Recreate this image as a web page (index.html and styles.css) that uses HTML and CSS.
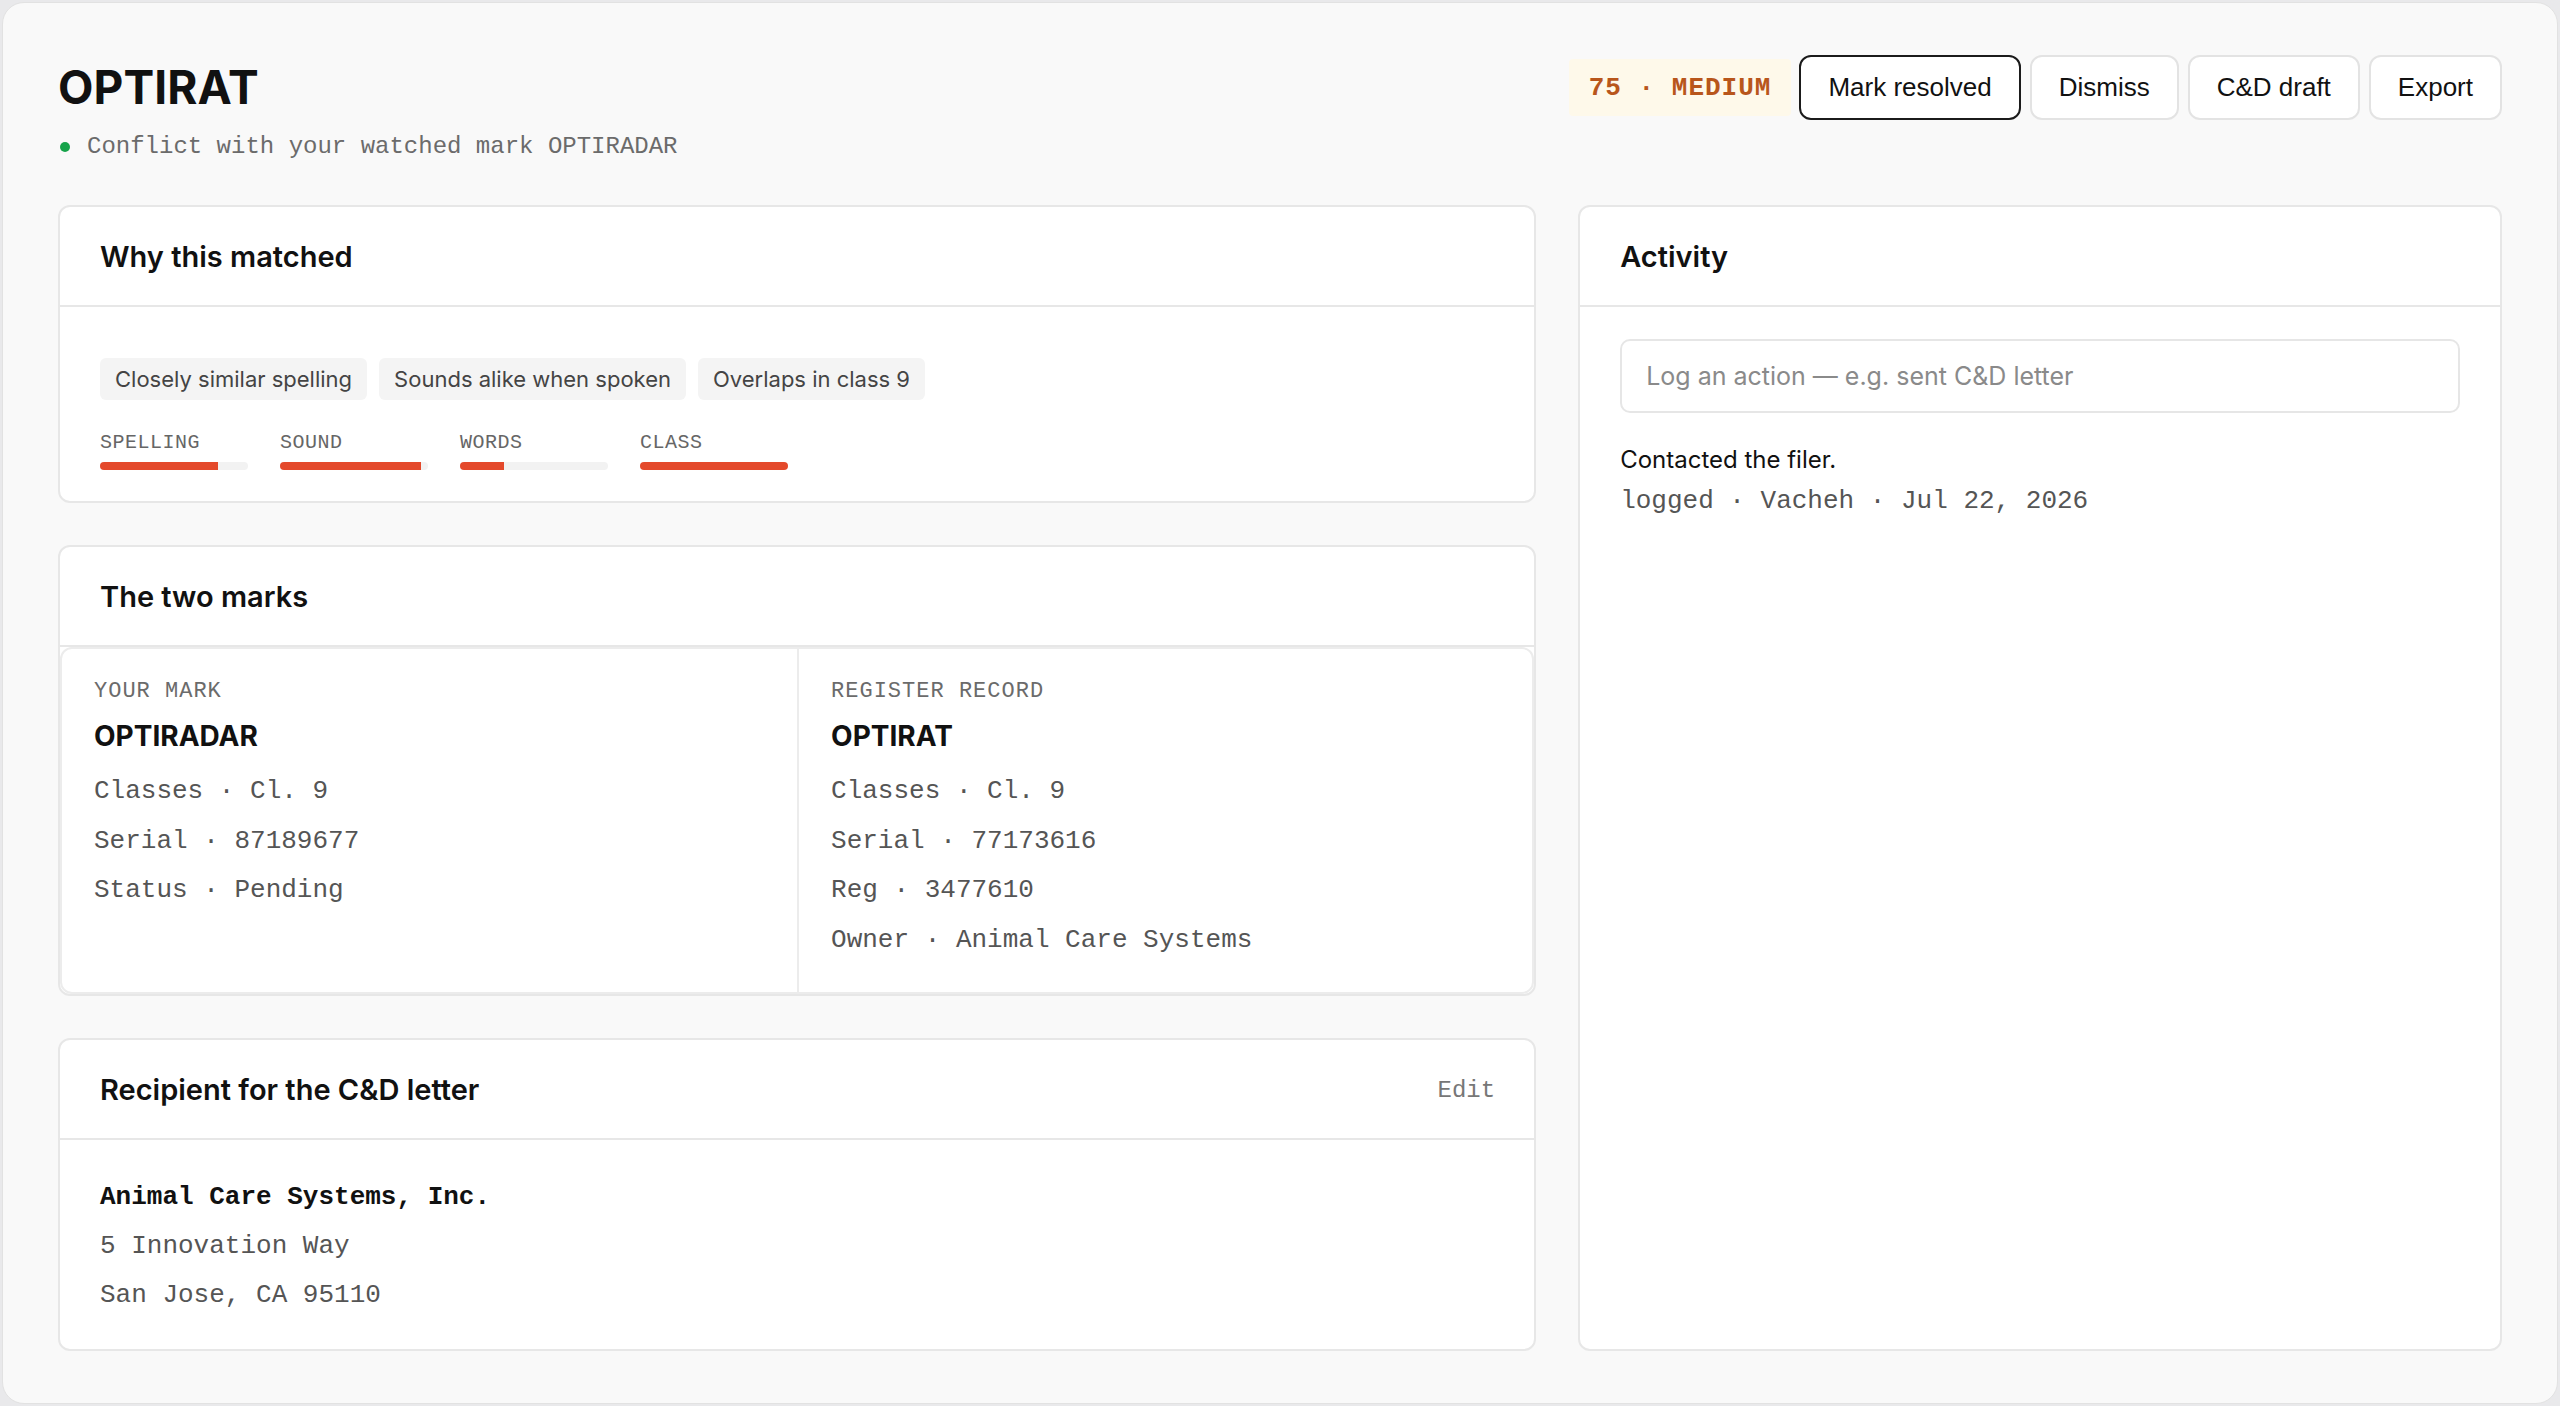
FILE: index.html
```html
<!DOCTYPE html>
<html>
    <head>
        <meta charset="utf-8">
        <title>OPTIRAT</title>
        <link rel="stylesheet" href="styles.css">
    </head>
    <body>
        <div class="frame">
            <div class="top">
                <div class="title-block">
                    <h1 class="title">OPTIRAT</h1>
                    <div class="subtitle"><span class="dot"></span>Conflict with your watched mark OPTIRADAR</div>
                </div>
                <div class="actions">
                    <span class="badge">75 · MEDIUM</span>
                    <button class="btn btn-primary">Mark resolved</button>
                    <button class="btn">Dismiss</button>
                    <button class="btn">C&amp;D draft</button>
                    <button class="btn">Export</button>
                </div>
            </div>

            <div class="layout">
                <div class="main-col">
                    <div class="card">
                        <div class="card-head"><h2>Why this matched</h2></div>
                        <div class="card-body why-body">
                            <div class="chips">
                                <span class="chip">Closely similar spelling</span>
                                <span class="chip">Sounds alike when spoken</span>
                                <span class="chip">Overlaps in class 9</span>
                            </div>
                            <div class="scores">
                                <div class="score">
                                    <div class="score-label">SPELLING</div>
                                    <div class="bar"><div class="fill" style="width:80%"></div></div>
                                </div>
                                <div class="score">
                                    <div class="score-label">SOUND</div>
                                    <div class="bar"><div class="fill" style="width:95%"></div></div>
                                </div>
                                <div class="score">
                                    <div class="score-label">WORDS</div>
                                    <div class="bar"><div class="fill" style="width:30%"></div></div>
                                </div>
                                <div class="score">
                                    <div class="score-label">CLASS</div>
                                    <div class="bar"><div class="fill" style="width:100%"></div></div>
                                </div>
                            </div>
                        </div>
                    </div>

                    <div class="card">
                        <div class="card-head"><h2>The two marks</h2></div>
                        <div class="marks">
                            <div class="mark">
                                <div class="mark-label">YOUR MARK</div>
                                <div class="mark-name">OPTIRADAR</div>
                                <div class="mark-row">Classes · Cl. 9</div>
                                <div class="mark-row">Serial · 87189677</div>
                                <div class="mark-row">Status · Pending</div>
                            </div>
                            <div class="mark">
                                <div class="mark-label">REGISTER RECORD</div>
                                <div class="mark-name">OPTIRAT</div>
                                <div class="mark-row">Classes · Cl. 9</div>
                                <div class="mark-row">Serial · 77173616</div>
                                <div class="mark-row">Reg · 3477610</div>
                                <div class="mark-row">Owner · Animal Care Systems</div>
                            </div>
                        </div>
                    </div>

                    <div class="card">
                        <div class="card-head">
                            <h2>Recipient for the C&amp;D letter</h2>
                            <span class="edit">Edit</span>
                        </div>
                        <div class="card-body address">
                            <div class="addr-name">Animal Care Systems, Inc.</div>
                            <div class="addr-line">5 Innovation Way</div>
                            <div class="addr-line">San Jose, CA 95110</div>
                        </div>
                    </div>
                </div>

                <div class="card activity">
                    <div class="card-head"><h2>Activity</h2></div>
                    <div class="card-body activity-body">
                        <input type="text" class="log-input" placeholder="Log an action — e.g. sent C&amp;D letter">
                        <div class="entry">Contacted the filer.</div>
                        <div class="entry-meta">logged · Vacheh · Jul 22, 2026</div>
                    </div>
                </div>
            </div>
        </div>
    </body>
</html>
```

FILE: styles.css
```css
* {
    box-sizing: border-box;
}

body {
    margin: 0;
    padding: 2px;
    background-color: #e9e9eb;
    font-family: Inter, "Noto Sans", sans-serif;
    color: #111;
}

.frame {
    height: 1402px;
    background-color: #f9f9f9;
    border: 1px solid #e2e2e2;
    border-radius: 22px;
    padding: 57px 55px;
}

/* header */
.top {
    display: flex;
    justify-content: space-between;
    align-items: flex-start;
}

.title {
    margin: 0;
    font-size: 46px;
    line-height: 55px;
    font-weight: 700;
    letter-spacing: 0.1px;
}

.subtitle {
    display: flex;
    align-items: center;
    margin-top: 16px;
    font-family: "Liberation Mono", monospace;
    font-size: 24px;
    line-height: 32px;
    color: #6b6b6b;
}

.dot {
    width: 10px;
    height: 10px;
    border-radius: 50%;
    background-color: #16a34a;
    margin: 0 17px 0 2px;
}

.actions {
    display: flex;
    align-items: center;
    gap: 9px;
    margin-top: -5px;
}

.badge {
    display: inline-flex;
    align-items: center;
    height: 57px;
    padding: 0 20px;
    margin-right: -1px;
    background-color: #fef9ea;
    border-radius: 4px;
    font-family: "Liberation Mono", monospace;
    font-weight: 700;
    font-size: 26px;
    letter-spacing: 1px;
    color: #b8561b;
}

.btn {
    height: 65px;
    padding: 0 27px;
    background-color: #fff;
    border: 2px solid #e3e3e3;
    border-radius: 12px;
    font-family: "Liberation Sans", Arial, sans-serif;
    font-size: 26px;
    color: #111;
    cursor: pointer;
}

.btn-primary {
    border-color: #1b1b1b;
}

/* layout */
.layout {
    display: grid;
    grid-template-columns: 1.6fr 1fr;
    gap: 42px;
    margin-top: 42px;
}

.main-col {
    display: flex;
    flex-direction: column;
    gap: 42px;
}

.card {
    background-color: #fff;
    border: 2px solid #e7e7e7;
    border-radius: 12px;
}

.card-head {
    display: flex;
    justify-content: space-between;
    align-items: center;
    height: 100px;
    padding: 0 40px;
    border-bottom: 2px solid #e7e7e7;
}

.card-head h2 {
    margin: 0;
    font-size: 29px;
    font-weight: 600;
}

.edit {
    font-family: "Liberation Mono", monospace;
    font-size: 24px;
    color: #777;
    margin: 2px -1px 0 0;
}

.card-body {
    padding: 33px 40px 29px;
}

/* why this matched */
.why-body {
    padding-top: 51px;
    padding-bottom: 31px;
}

.chips {
    display: flex;
    gap: 12px;
}

.chip {
    display: inline-flex;
    align-items: center;
    height: 42px;
    padding: 0 15px;
    background-color: #f4f4f4;
    border-radius: 6px;
    font-size: 22px;
    color: #444;
}

.scores {
    display: flex;
    gap: 32px;
    margin-top: 31px;
}

.score {
    width: 148px;
}

.score-label {
    font-family: "Liberation Mono", monospace;
    font-size: 20px;
    line-height: 24px;
    letter-spacing: 0.5px;
    color: #666;
}

.bar {
    height: 8px;
    margin-top: 7px;
    background-color: #f2f2f2;
    border-radius: 4px;
    overflow: hidden;
}

.fill {
    height: 100%;
    background-color: #e4492b;
}

/* two marks */
.marks {
    display: grid;
    grid-template-columns: 1fr 1fr;
    border: 2px solid #ececec;
    border-radius: 12px;
}

.mark {
    padding: 29px 32px 27px;
}

.mark + .mark {
    border-left: 2px solid #ececec;
}

.mark-label {
    font-family: "Liberation Mono", monospace;
    font-size: 22px;
    line-height: 28px;
    letter-spacing: 1px;
    color: #6b6b6b;
}

.mark-name {
    margin-top: 12px;
    font-size: 28px;
    line-height: 36px;
    font-weight: 700;
}

.mark-row {
    font-family: "Liberation Mono", monospace;
    font-size: 26px;
    line-height: 49.5px;
    color: #555;
}

.mark-name + .mark-row {
    margin-top: 13px;
}

/* recipient */
.address {
    font-family: "Liberation Mono", monospace;
    font-size: 26px;
    line-height: 49px;
}

.addr-name {
    font-weight: 700;
    color: #111;
}

.addr-line {
    color: #555;
}

/* activity */
.activity-body {
    padding-top: 32px;
}

.log-input {
    display: block;
    width: 100%;
    height: 74px;
    padding: 0 24px;
    border: 2px solid #e6e6e6;
    border-radius: 10px;
    font-family: Inter, sans-serif;
    font-size: 25px;
    color: #111;
    outline: none;
}

.log-input::placeholder {
    color: #8a8a8a;
}

.entry {
    margin-top: 31px;
    font-size: 24px;
    line-height: 32px;
    color: #111;
}

.entry-meta {
    margin-top: 5px;
    font-family: "Liberation Mono", monospace;
    font-size: 26px;
    line-height: 40px;
    color: #555;
}
```
